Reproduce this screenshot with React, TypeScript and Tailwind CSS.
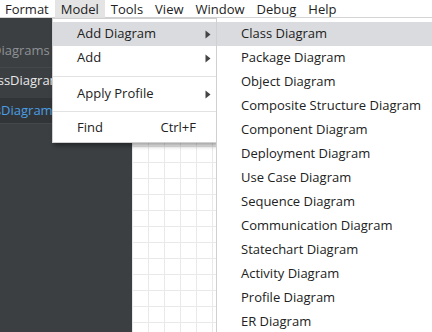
import React from "react";

const font = { fontFamily: '"Open Sans", "Noto Sans", sans-serif' };

function Arrow() {
  return (
    <svg width="6" height="9" viewBox="0 0 6 9" className="block">
      <path d="M0.5 0.5 L5.5 4.5 L0.5 8.5 Z" fill="#444" />
    </svg>
  );
}

const subItems = [
  "Class Diagram",
  "Package Diagram",
  "Object Diagram",
  "Composite Structure Diagram",
  "Component Diagram",
  "Deployment Diagram",
  "Use Case Diagram",
  "Sequence Diagram",
  "Communication Diagram",
  "Statechart Diagram",
  "Activity Diagram",
  "Profile Diagram",
  "ER Diagram",
];

const menus = ["Format", "Model", "Tools", "View", "Window", "Debug", "Help"];

export default function App() {
  return (
    <div
      className="relative w-[432px] h-[332px] overflow-hidden bg-white text-[13px] text-[#222]"
      style={font}
    >
      {/* menubar */}
      <div className="flex h-[18px] items-center bg-white border-b border-[#d4d4d4]">
        <div className="flex h-full items-center -ml-[1px]">
          {menus.map((m) => (
            <span
              key={m}
              className={`px-[6px] h-[18px] leading-[19px] ${m === "Model" ? "bg-[#e4e4e4]" : ""}`}
            >
              {m}
            </span>
          ))}
        </div>
      </div>

      {/* body */}
      <div className="flex h-[314px]">
        <div className="w-[132px] bg-[#3b3f42] flex flex-col overflow-hidden whitespace-nowrap">
          <div className="h-[20px]" />
          <div className="h-[26px] flex items-center text-[#8e9295] -ml-[8px]">Diagrams</div>
          <div className="h-[4px] border-b border-[#44484b]" />
          <div className="h-[26px] flex items-center text-[#e8e8e8] -ml-[21px]">ClassDiagram1</div>
          <div className="h-[4px]" />
          <div className="h-[26px] flex items-center text-[#4a9ee3] bg-[#323538] border-b border-[#44484b]">
            <span className="-ml-[30px]">ClassDiagram1</span>
          </div>
        </div>
        <div
          className="flex-1 bg-white"
          style={{
            backgroundImage:
              "linear-gradient(to right, #e9e9e9 1px, transparent 1px), linear-gradient(to bottom, #e9e9e9 1px, transparent 1px)",
            backgroundSize: "16px 16px",
          }}
        />
      </div>

      {/* Model dropdown */}
      <div className="absolute left-[52px] top-[18px] w-[165px] bg-white border border-[#d0d0d0] shadow-[2px_3px_4px_rgba(0,0,0,0.35)] pt-[3px] pb-[2px]">
        <div className="h-[24px] flex items-center bg-[#dadbde] pl-[24px] pr-[5px]">
          <span className="flex-1">Add Diagram</span>
          <Arrow />
        </div>
        <div className="h-[24px] flex items-center pl-[24px] pr-[5px]">
          <span className="flex-1">Add</span>
          <Arrow />
        </div>
        <div className="h-[12px] flex items-center">
          <div className="w-full h-px bg-[#e2e2e2]" />
        </div>
        <div className="h-[24px] flex items-center pl-[24px] pr-[5px]">
          <span className="flex-1">Apply Profile</span>
          <Arrow />
        </div>
        <div className="h-[10px] flex items-center">
          <div className="w-full h-px bg-[#e2e2e2]" />
        </div>
        <div className="h-[24px] flex items-center pl-[24px] pr-[5px]">
          <span className="flex-1">Find</span>
          <span className="mr-[15px]">Ctrl+F</span>
        </div>
      </div>

      {/* submenu */}
      <div className="absolute left-[216px] top-[18px] w-[230px] h-[330px] bg-white border-l border-[#d0d0d0] pt-[4px]">
        {subItems.map((t, i) => (
          <div
            key={t}
            className={`h-[24px] flex items-center pl-[24px] whitespace-nowrap ${i === 0 ? "bg-[#dadbde]" : ""}`}
          >
            {t}
          </div>
        ))}
      </div>
    </div>
  );
}
